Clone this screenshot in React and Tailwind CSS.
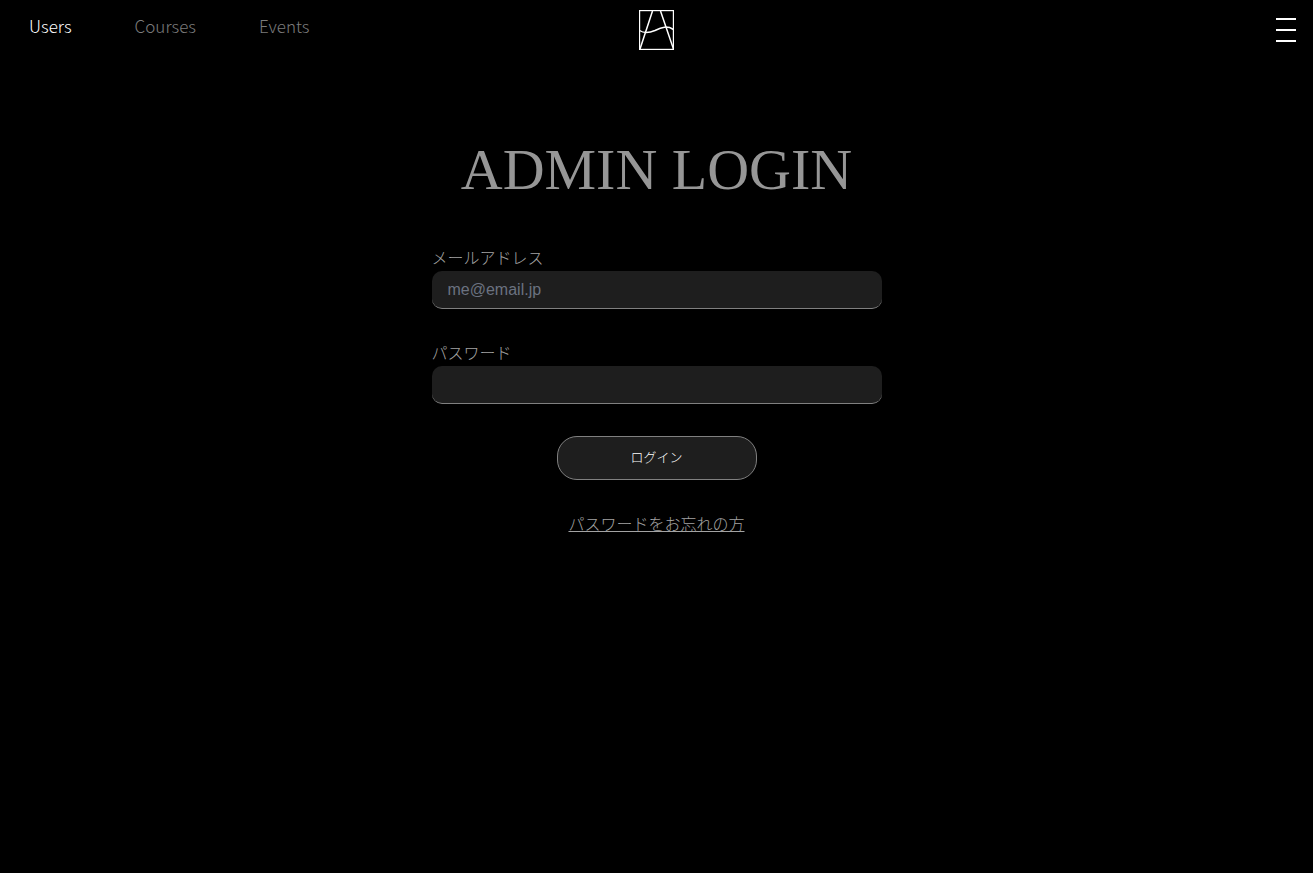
import { useState } from 'react'

const navItems = ['Users', 'Courses', 'Events']

function Logo() {
  return (
    <svg width="35" height="40" viewBox="0 0 35 40" fill="none" stroke="white" aria-hidden="true">
      <rect x="0.5" y="0.5" width="34" height="39" strokeWidth="1.4" />
      <path d="M13.5 1L1 39M21.5 1L34.5 39" strokeWidth="1.5" />
      <path d="M0.5 20.5C5 23.5 10 23 16 20.5C23 17 28 15.5 34.5 19.5" strokeWidth="1.5" />
    </svg>
  )
}

function Header() {
  return (
    <header className="grid h-[60px] grid-cols-[1fr_auto_1fr] items-center">
      <nav className="flex gap-[63px] pb-2 pl-[29px] text-[17px] leading-6">
        {navItems.map((item, i) => (
          <a key={item} href="#" className={i === 0 ? 'text-white' : 'text-[#7c7c7c]'}>
            {item}
          </a>
        ))}
      </nav>
      <a href="#" aria-label="Home">
        <Logo />
      </a>
      <button type="button" aria-label="Menu" className="mr-[17px] flex flex-col gap-[9px] justify-self-end">
        <span className="h-0.5 w-5 bg-white" />
        <span className="h-0.5 w-5 bg-white" />
        <span className="h-0.5 w-5 bg-white" />
      </button>
    </header>
  )
}

function Field({ id, label, ...props }) {
  return (
    <div className="w-full">
      <label htmlFor={id} className="block pb-[3px] leading-[22px]">
        {label}
      </label>
      <input
        id={id}
        className="block h-[38px] w-full rounded-[10px] border-b border-[#808080] bg-[#1e1e1e] px-4 font-['Liberation_Sans',sans-serif] text-white outline-none placeholder:text-[#6b7280]"
        {...props}
      />
    </div>
  )
}

function App() {
  const [email, setEmail] = useState('')
  const [password, setPassword] = useState('')

  const handleSubmit = (event) => {
    event.preventDefault()
  }

  return (
    <div className="min-h-screen bg-black font-['Noto_Sans_CJK_JP',sans-serif] font-light text-[#a3a3a3]">
      <Header />
      <main className="flex flex-col items-center px-4 pt-[74px]">
        <h1 className="text-center font-['Liberation_Serif',serif] text-[58px] leading-[72px] font-normal text-[#969696]">
          ADMIN LOGIN
        </h1>
        <form onSubmit={handleSubmit} className="mt-10 flex w-full max-w-[450px] flex-col items-center gap-8">
          <Field
            id="email"
            label="メールアドレス"
            type="email"
            placeholder="me@email.jp"
            value={email}
            onChange={(event) => setEmail(event.target.value)}
          />
          <Field
            id="password"
            label="パスワード"
            type="password"
            value={password}
            onChange={(event) => setPassword(event.target.value)}
          />
          <button
            type="submit"
            className="h-11 w-[200px] rounded-[20px] border border-[#808080] bg-[#1e1e1e] pb-0.5 text-[13px] text-white"
          >
            ログイン
          </button>
        </form>
        <a href="#" className="mt-8 leading-[22px] underline">
          パスワードをお忘れの方
        </a>
      </main>
    </div>
  )
}

export default App
